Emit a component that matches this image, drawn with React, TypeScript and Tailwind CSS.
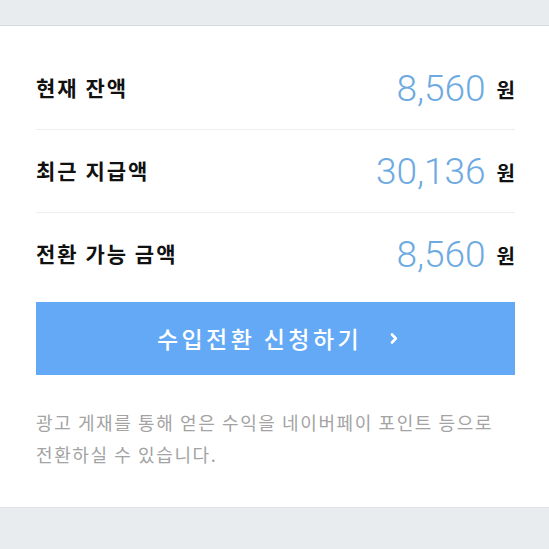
import React from 'react';

const rows = [
  { label: '현재 잔액', amount: '8,560' },
  { label: '최근 지급액', amount: '30,136' },
  { label: '전환 가능 금액', amount: '8,560' },
];

const kr = '"Noto Sans CJK KR", "Noto Sans", sans-serif';

const App: React.FC = () => {
  return (
    <div className="w-[549px] h-[549px] bg-[#e8ecef] flex flex-col overflow-hidden" style={{ fontFamily: kr }}>
      <div className="h-[26px] shrink-0 border-b border-[#d6d9de]" />
      <div className="bg-white pl-[36px] pr-[34px] pt-[21px] pb-[37px] border-b border-[#dfe2e6]">
        {rows.map((r, i) => (
          <div
            key={r.label}
            className={`flex items-center justify-between ${i < rows.length - 1 ? 'border-b border-[#eeeeee] h-[83px]' : 'h-[82px]'}`}
          >
            <span className="text-[21px] font-bold text-[#111] tracking-[2px]">{r.label}</span>
            <span className="flex items-center gap-[11px]">
              <span
                className="text-[37px] text-[#6eaae2] leading-none"
                style={{ fontFamily: 'Roboto, "Liberation Sans", sans-serif', fontWeight: 300 }}
              >
                {r.amount}
              </span>
              <span className="text-[20px] font-bold text-[#111] leading-none mt-[4px]">원</span>
            </span>
          </div>
        ))}
        <button className="mt-[7px] w-full h-[73px] bg-[#63a9f6] flex items-center justify-center text-white">
          <span className="text-[23px] font-medium tracking-[3.4px] ml-[4px]">수입전환 신청하기</span>
          <svg className="ml-[28px]" width="8" height="11" viewBox="0 0 8 11" fill="none">
            <path d="M2 1.5 L5.8 5.5 L2 9.5" stroke="white" strokeWidth="2.6" strokeLinecap="round" strokeLinejoin="round" />
          </svg>
        </button>
        <p className="mt-[31px] text-[18px] leading-[32px] text-[#a3a3a3] tracking-[1.6px]">
          광고 게재를 통해 얻은 수익을 네이버페이 포인트 등으로
          <br />
          전환하실 수 있습니다.
        </p>
      </div>
      <div className="flex-1" />
    </div>
  );
};

export default App;
